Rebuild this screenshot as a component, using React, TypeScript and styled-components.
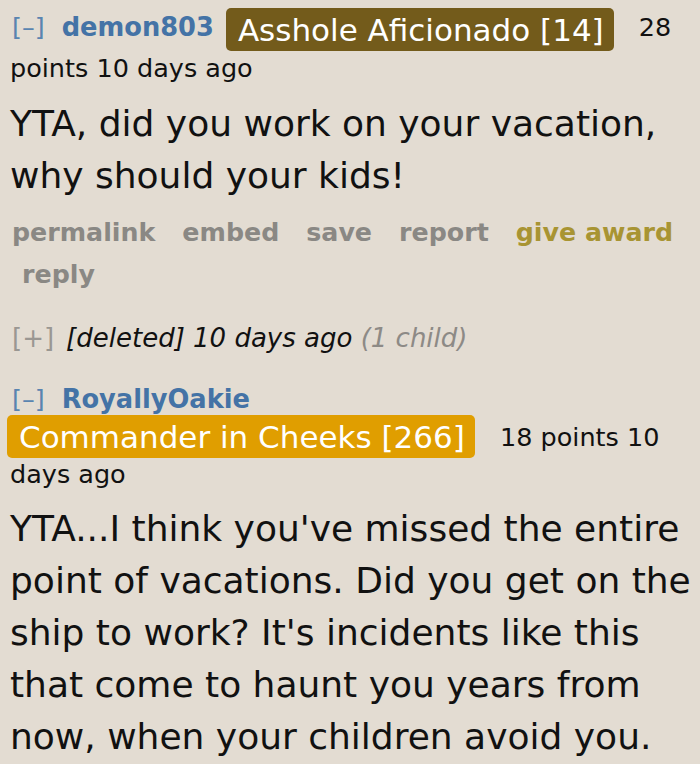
import React from "react";
import styled, { createGlobalStyle } from "styled-components";

const GlobalStyle = createGlobalStyle`
  html, body {
    margin: 0;
    padding: 0;
    background: #e3dcd2;
  }
  body {
    font-family: "DejaVu Sans", Verdana, sans-serif;
    color: #111111;
  }
`;

const Page = styled.div`
  width: 700px;
  height: 764px;
  overflow: hidden;
  background: #e3dcd2;
  padding: 8px 8px 0 10px;
  box-sizing: border-box;
`;

const Comment = styled.div`
  display: flex;
  flex-direction: column;
`;

const Tagline = styled.p<{ $lh: number }>`
  margin: 0;
  font-size: 25.5px;
  line-height: ${(p) => p.$lh}px;
  color: #111111;
`;

const Expand = styled.span<{ $muted?: boolean }>`
  font-style: normal;
  color: ${(p) => (p.$muted ? "#9a9792" : "#5a84b0")};
  margin-left: 2px;
  margin-right: ${(p) => (p.$muted ? "12px" : "17px")};
`;

const Author = styled.span`
  font-weight: bold;
  font-size: 25.7px;
  color: #4473a6;
  margin-right: 7px;
`;

const Flair = styled.span<{ $bg: string; $shift: number }>`
  background: ${(p) => p.$bg};
  color: #ffffff;
  font-size: 31px;
  white-space: nowrap;
  padding: 3.5px 10px 3.5px 12px;
  margin-left: -3px;
  margin-right: 17px;
  border-radius: 5px;
  vertical-align: -${(p) => p.$shift}px;
`;

const Body = styled.div`
  font-size: 36px;
  line-height: 52px;
  color: #111111;
  padding: 10px 0 10px;
`;

const Actions = styled.ul`
  list-style: none;
  margin: 0;
  padding: 0 0 0 2px;
  display: flex;
  flex-wrap: wrap;
  column-gap: 27px;
  font-size: 25.3px;
  font-weight: bold;
  line-height: 42px;
`;

const Action = styled.li<{ $gold?: boolean; $indent?: boolean }>`
  color: ${(p) => (p.$gold ? "#a89433" : "#8a8884")};
  margin-left: ${(p) => (p.$indent ? "10px" : "0")};
`;

const Collapsed = styled.p`
  margin: 23px 0 23px;
  font-size: 26px;
  line-height: 39px;
  font-style: italic;
`;

const Muted = styled.span`
  color: #8d8a86;
`;

export default function App() {
  return (
    <Page>
      <GlobalStyle />
      <Comment>
        <Tagline $lh={39}>
          <Expand>[–]</Expand>
          <Author>demon803</Author>{" "}
          <Flair $bg="#735b1b" $shift={4}>
            Asshole Aficionado [14]
          </Flair>{" "}
          28 points 10 days ago
        </Tagline>
        <Body>YTA, did you work on your vacation, why should your kids!</Body>
        <Actions>
          <Action>permalink</Action>
          <Action>embed</Action>
          <Action>save</Action>
          <Action>report</Action>
          <Action $gold>give award</Action>
          <Action $indent>reply</Action>
        </Actions>
      </Comment>

      <Collapsed>
        <Expand $muted>[+]</Expand>
        [deleted] 10 days ago <Muted>(1 child)</Muted>
      </Collapsed>

      <Comment>
        <Tagline $lh={37}>
          <Expand>[–]</Expand>
          <Author>RoyallyOakie</Author>{" "}
          <Flair $bg="#e09e00" $shift={1.5}>
            Commander in Cheeks [266]
          </Flair>{" "}
          18 points 10 days ago
        </Tagline>
        <Body>
          YTA...I think you've missed the entire point of vacations. Did you get
          on the ship to work? It's incidents like this that come to haunt you
          years from now, when your children avoid you.
        </Body>
      </Comment>
    </Page>
  );
}
